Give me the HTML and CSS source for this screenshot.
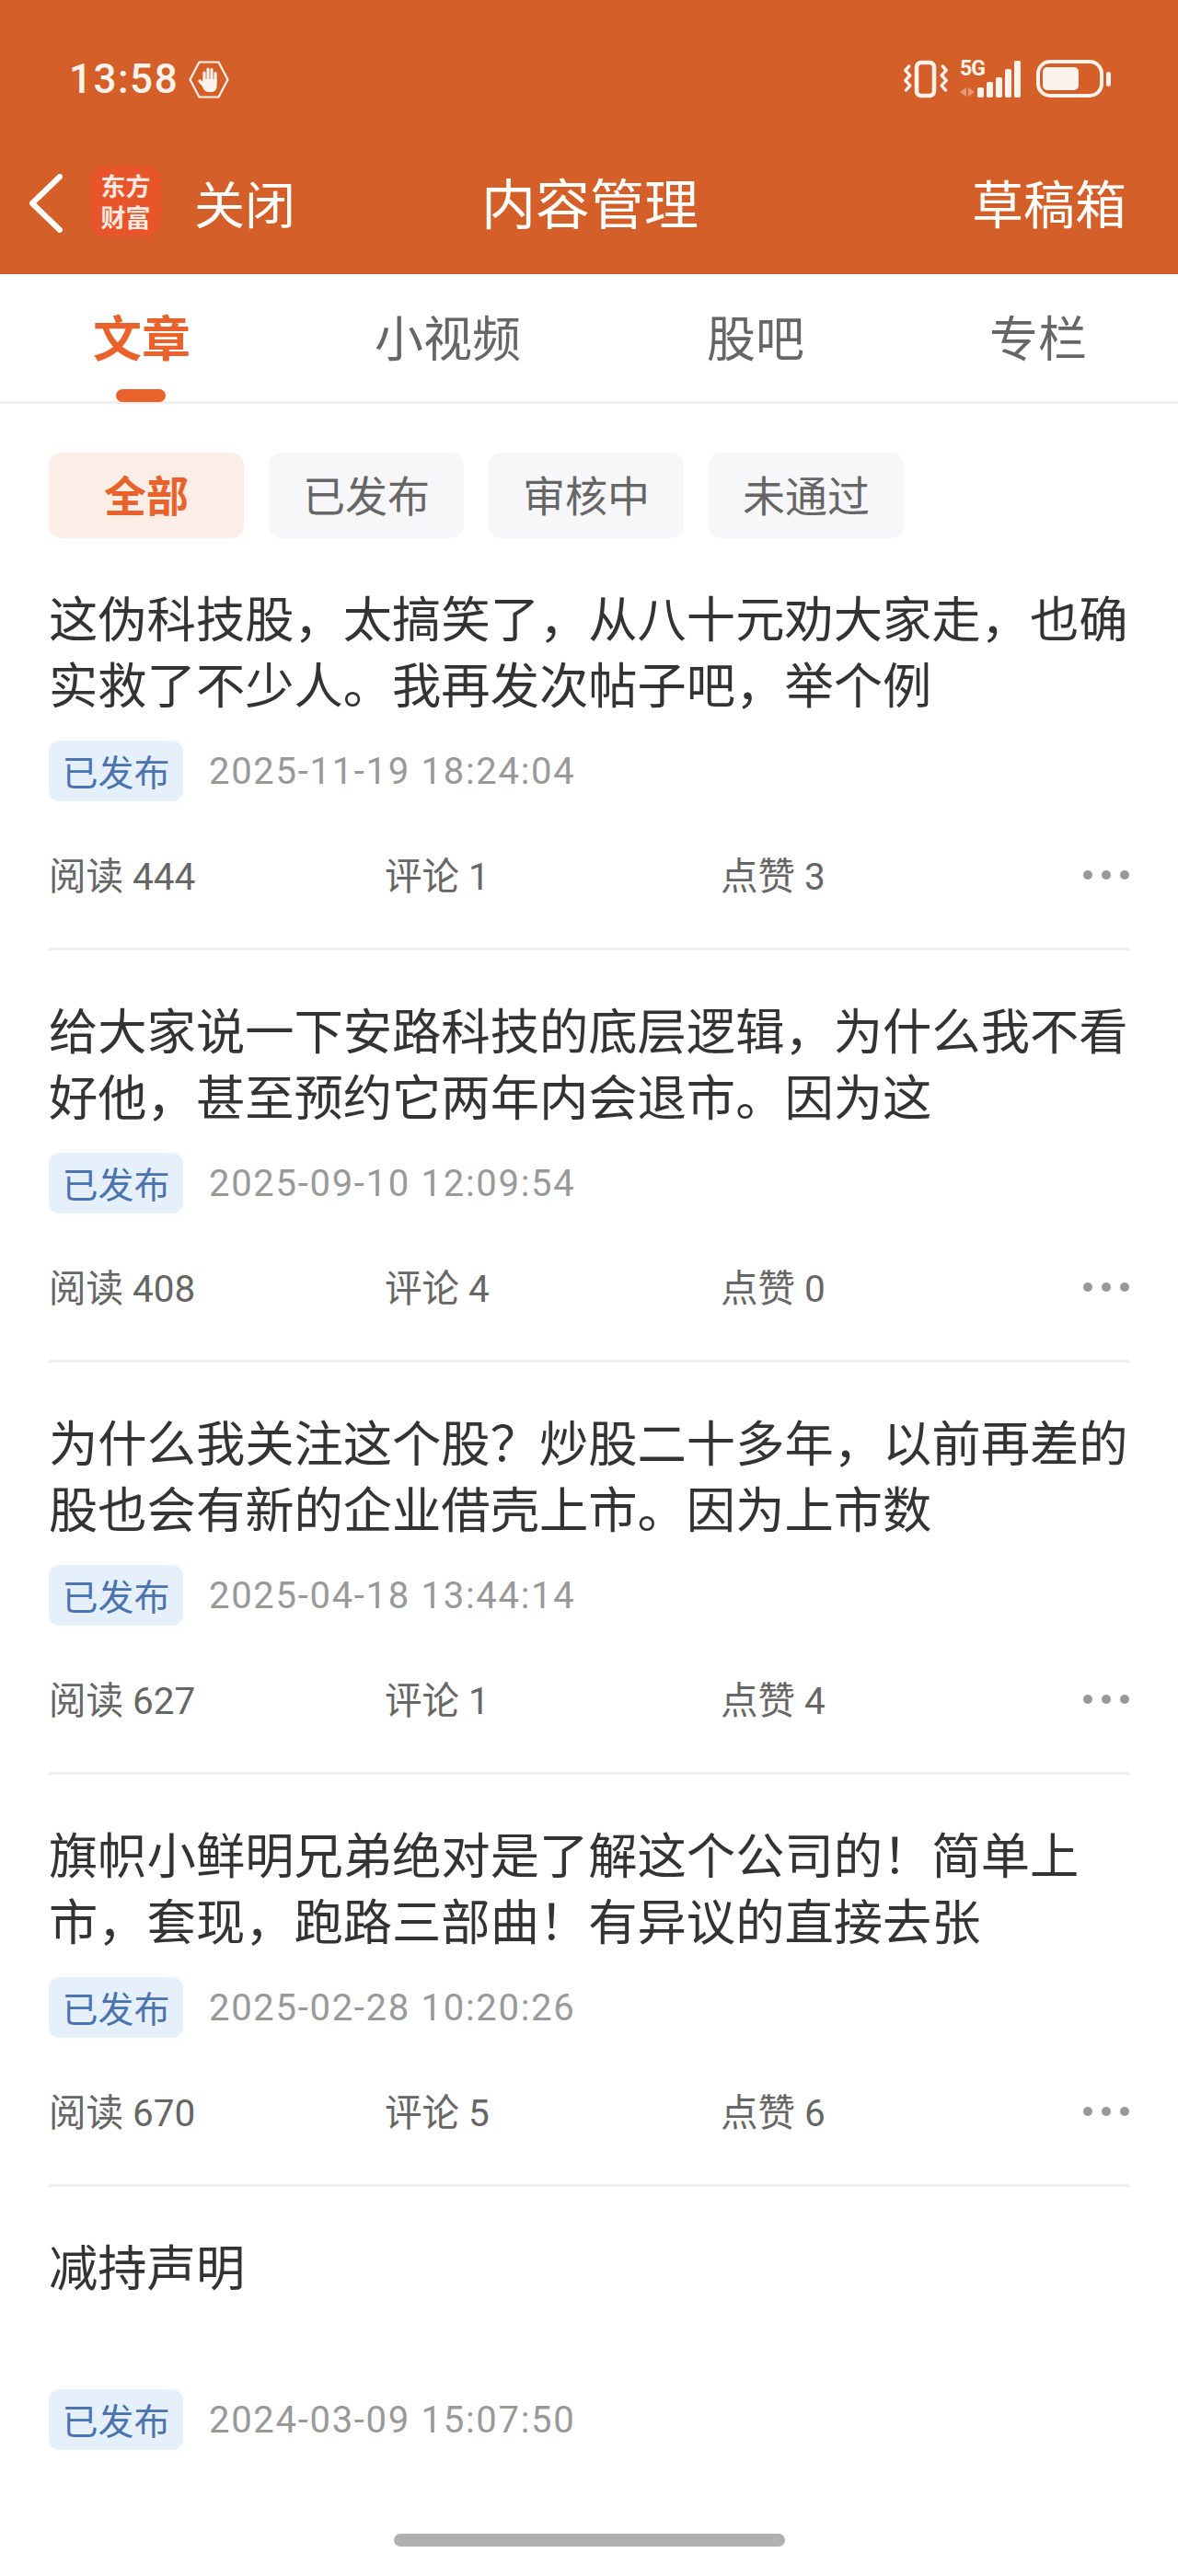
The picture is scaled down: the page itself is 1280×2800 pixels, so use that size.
FILE: index.html
```html
<!DOCTYPE html>
<html lang="zh-CN">
<head>
    <meta charset="UTF-8">
    <meta name="viewport" content="width=device-width, initial-scale=1.0">
    <title>内容管理</title>
    <link rel="stylesheet" href="styles.css">
</head>
<body>

    <header class="top">
        <div class="status">
            <div class="status-left">
                <span class="clock">13:58</span>
                <svg class="hand" viewBox="0 0 44 41" width="44" height="41">
                    <path d="M11.500 1.500h21L42.500 20.500 32.500 39.500h-21L1.500 20.500z" fill="none" stroke="#fdf3ec" stroke-width="2.200" stroke-linejoin="round"/>
                    <path d="M17 13v10M21 9v13M25 9.500v13M29 13.500v11" fill="none" stroke="#fdf3ec" stroke-width="3.100" stroke-linecap="round"/>
                    <path d="M12 22l4.500 5" fill="none" stroke="#fdf3ec" stroke-width="3.400" stroke-linecap="round"/>
                    <path d="M15.500 20h15.100v8c0 3.500-2.500 6-6 6h-2.600c-3 0-4.600-1.500-6.500-4z" fill="#fdf3ec"/>
                </svg>
            </div>
            <div class="status-right">
                <svg class="vibrate" viewBox="0 0 48 42" width="48" height="42">
                    <rect x="14" y="3" width="19" height="36" rx="5" fill="none" stroke="#fdf3ec" stroke-width="4.500"/>
                    <path d="M5.700 7L1.800 11.300 6.800 17 1.800 22.300 6.800 28 2.500 33M42.300 7L46.200 11.300 41.200 17 46.200 22.300 41.200 28 45.500 33" fill="none" stroke="#fdf3ec" stroke-width="3.400" stroke-linecap="round" stroke-linejoin="round"/>
                </svg>
                <div class="signal">
                    <div class="net">
                        <span class="net-5g">5G</span>
                        <svg class="net-arrows" viewBox="0 0 16 10" width="16" height="10">
                            <path d="M7 0v10L0 5zM9 0l7 5-7 5z" fill="#e8977a"/>
                        </svg>
                    </div>
                    <div class="bars">
                        <i class="bar bar-1"></i>
                        <i class="bar bar-2"></i>
                        <i class="bar bar-3"></i>
                        <i class="bar bar-4"></i>
                        <i class="bar bar-5"></i>
                    </div>
                </div>
                <div class="battery">
                    <div class="battery-body"><div class="battery-level"></div></div>
                    <div class="battery-nub"></div>
                </div>
            </div>
        </div>
        <div class="nav">
            <div class="nav-left">
                <svg class="back" viewBox="0 0 36 64" width="36" height="64">
                    <path d="M33 3L3 32l30 29" fill="none" stroke="#fff" stroke-width="6" stroke-linecap="round" stroke-linejoin="round"/>
                </svg>
                <div class="logo">东方<br>财富</div>
                <span class="nav-close">关闭</span>
            </div>
            <div class="nav-title">内容管理</div>
            <div class="nav-right">草稿箱</div>
        </div>
    </header>

    <nav class="tabs">
        <div class="tab tab-active">文章</div>
        <div class="tab">小视频</div>
        <div class="tab">股吧</div>
        <div class="tab">专栏</div>
    </nav>

    <div class="filters">
        <div class="filter filter-active">全部</div>
        <div class="filter">已发布</div>
        <div class="filter">审核中</div>
        <div class="filter">未通过</div>
    </div>

    <main class="list">
        <article class="item">
            <h3 class="item-title">这伪科技股，太搞笑了，从八十元劝大家走，也确实救了不少人。我再发次帖子吧，举个例</h3>
            <div class="item-meta"><span class="tag">已发布</span><span class="date">2025-11-19 18:24:04</span></div>
            <div class="stats">
                <span class="stat">阅读 444</span><span class="stat">评论 1</span><span class="stat">点赞 3</span>
                <div class="more"><i></i><i></i><i></i></div>
            </div>
        </article>
        <article class="item">
            <h3 class="item-title">给大家说一下安路科技的底层逻辑，为什么我不看好他，甚至预约它两年内会退市。因为这</h3>
            <div class="item-meta"><span class="tag">已发布</span><span class="date">2025-09-10 12:09:54</span></div>
            <div class="stats">
                <span class="stat">阅读 408</span><span class="stat">评论 4</span><span class="stat">点赞 0</span>
                <div class="more"><i></i><i></i><i></i></div>
            </div>
        </article>
        <article class="item">
            <h3 class="item-title">为什么我关注这个股？炒股二十多年，以前再差的股也会有新的企业借壳上市。因为上市数</h3>
            <div class="item-meta"><span class="tag">已发布</span><span class="date">2025-04-18 13:44:14</span></div>
            <div class="stats">
                <span class="stat">阅读 627</span><span class="stat">评论 1</span><span class="stat">点赞 4</span>
                <div class="more"><i></i><i></i><i></i></div>
            </div>
        </article>
        <article class="item">
            <h3 class="item-title">旗帜小鲜明兄弟绝对是了解这个公司的！简单上市，套现，跑路三部曲！有异议的直接去张</h3>
            <div class="item-meta"><span class="tag">已发布</span><span class="date">2025-02-28 10:20:26</span></div>
            <div class="stats">
                <span class="stat">阅读 670</span><span class="stat">评论 5</span><span class="stat">点赞 6</span>
                <div class="more"><i></i><i></i><i></i></div>
            </div>
        </article>
        <article class="item item-last">
            <h3 class="item-title">减持声明</h3>
            <div class="item-meta"><span class="tag">已发布</span><span class="date">2024-03-09 15:07:50</span></div>
        </article>
    </main>

    <div class="home-bar"></div>

</body>
</html>
```

FILE: styles.css
```css
* {
    box-sizing: border-box;
}
body {
    margin: 0;
    height: 2800px;
    display: flex;
    flex-direction: column;
    background-color: #fff;
    font-family: "Noto Sans CJK SC", Roboto, sans-serif;
    color: #333;
    overflow: hidden;
}

/* header */
.top {
    height: 298px;
    background-color: #d55f28;
    color: #fff;
    flex-shrink: 0;
}
.status {
    height: 180px;
    padding: 65px 73px 0 75px;
    display: flex;
    justify-content: space-between;
    align-items: flex-start;
}
.status-left {
    display: flex;
    align-items: center;
    gap: 11px;
    height: 42px;
}
.clock {
    font-family: Roboto, sans-serif;
    font-weight: 500;
    font-size: 44px;
    letter-spacing: 1.500px;
    color: #fdf3ec;
}
.status-right {
    display: flex;
    align-items: flex-start;
    color: #fdf3ec;
}
.vibrate {
    display: block;
}
.signal {
    position: relative;
    width: 66px;
    height: 41px;
    margin-left: 13px;
}
.net {
    display: flex;
    flex-direction: column;
    width: 30px;
}
.net-5g {
    font-family: Roboto, sans-serif;
    font-weight: 700;
    font-size: 23px;
    line-height: 20px;
    letter-spacing: -1px;
}
.net-arrows {
    display: block;
    margin-top: 10px;
}
.bars {
    position: absolute;
    right: 0;
    bottom: 0;
    display: flex;
    align-items: flex-end;
    gap: 3px;
}
.bar {
    display: block;
    width: 7px;
    border-radius: 2px;
    background: #fdf3ec;
}
.bar-1 { height: 11px; }
.bar-2 { height: 17px; }
.bar-3 { height: 22px; }
.bar-4 { height: 31px; }
.bar-5 { height: 40px; }
.battery {
    display: flex;
    align-items: center;
    margin-left: 17px;
}
.battery-body {
    width: 73px;
    height: 41px;
    padding: 4px 3px;
    border: 4px solid #fdf3ec;
    border-radius: 15px;
}
.battery-level {
    width: 39px;
    height: 100%;
    border-radius: 5px;
    background: #fdf3ec;
}
.battery-nub {
    width: 5px;
    height: 16px;
    margin-left: 3px;
    border-radius: 3px;
    background: #fdf3ec;
}
.nav {
    position: relative;
    height: 118px;
    padding: 0 56px 0 32px;
    display: flex;
    justify-content: space-between;
    align-items: flex-start;
    font-size: 56px;
    line-height: 78px;
}
.nav-left {
    display: flex;
    align-items: flex-start;
}
.back {
    display: block;
    margin-top: 9px;
}
.logo {
    width: 77px;
    height: 78px;
    margin-left: 30px;
    padding-top: 5px;
    border-radius: 18px;
    background-color: #e8552b;
    font-size: 27px;
    font-weight: 700;
    line-height: 34px;
    text-align: center;
    color: #fde9df;
}
.nav-close {
    margin-left: 36px;
    font-size: 55px;
}
.nav-title {
    position: absolute;
    left: 523px;
    top: 0;
    font-size: 59px;
}
.nav-right {
    font-size: 56px;
}

/* tabs */
.tabs {
    height: 141px;
    flex-shrink: 0;
    display: flex;
    border-bottom: 3px solid #f0f0f0;
}
.tab {
    position: relative;
    font-size: 53px;
    line-height: 72px;
    padding-top: 31px;
    color: #666;
}
.tab:nth-child(1) { margin-left: 101px; }
.tab:nth-child(2) { margin-left: 200px; }
.tab:nth-child(3) { margin-left: 202px; }
.tab:nth-child(4) { margin-left: 201px; }
.tab-active {
    font-weight: 700;
    color: #e9622c;
}
.tab-active::after {
    content: "";
    position: absolute;
    left: 25px;
    bottom: -1px;
    width: 54px;
    height: 14px;
    border-radius: 7px;
    background-color: #e9622c;
}

/* filter buttons */
.filters {
    display: flex;
    flex-shrink: 0;
    gap: 27px;
    padding: 53px 53px 0;
}
.filter {
    width: 212px;
    height: 93px;
    border-radius: 14px;
    background-color: #f7f7f9;
    font-size: 46px;
    line-height: 88px;
    text-align: center;
    color: #666;
}
.filter-active {
    background-color: #fceee7;
    font-weight: 700;
    color: #e9622c;
}

/* list */
.list {
    flex: 1;
    min-height: 0;
    padding: 0 53px;
}
.item {
    height: 448px;
    padding-top: 49px;
    border-bottom: 3px solid #eee;
}
.item-last {
    height: auto;
    border-bottom: 0;
}
.item-title {
    margin: 0;
    height: 144px;
    font-size: 53.300px;
    font-weight: 400;
    line-height: 72px;
    color: #333;
}
.item-meta {
    display: flex;
    align-items: center;
    margin-top: 27px;
}
.tag {
    width: 146px;
    height: 66px;
    border-radius: 12px;
    background-color: #e6f0fa;
    font-size: 39px;
    line-height: 64px;
    text-align: center;
    color: #4a73b0;
}
.date {
    margin-left: 28px;
    font-family: Roboto, sans-serif;
    font-size: 40px;
    letter-spacing: 1.700px;
    color: #999;
}
.stats {
    display: flex;
    align-items: center;
    margin-top: 54px;
    height: 48px;
}
.stat {
    width: 365px;
    font-family: Roboto, "Noto Sans CJK SC", sans-serif;
    font-size: 40.500px;
    color: #666;
}
.more {
    margin-left: auto;
    margin-top: 4px;
    display: flex;
    gap: 10px;
}
.more i {
    display: block;
    width: 10px;
    height: 10px;
    border-radius: 50%;
    background-color: #999;
}
.home-bar {
    width: 425px;
    height: 14px;
    flex-shrink: 0;
    margin: 0 auto 32px;
    border-radius: 7px;
    background-color: #b0b0b0;
}
```
